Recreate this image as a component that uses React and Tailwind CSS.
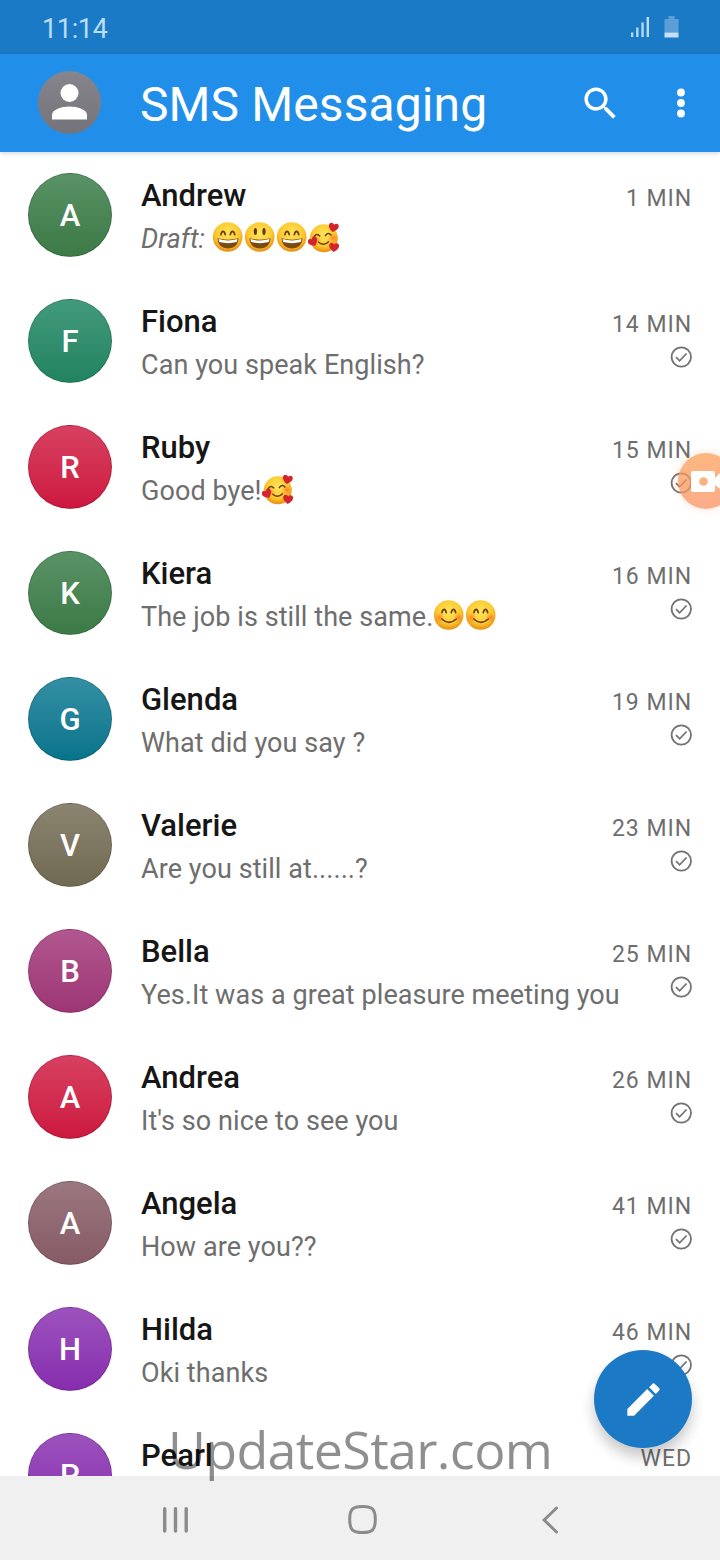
import React from "react";

const conversations = [
  { name: "Andrew", text: "Draft: ", draft: true, emojis: ["grin", "open", "grin", "love"], time: "1 MIN", color: "from-[#5a9266] to-[#3c7a46]" },
  { name: "Fiona", text: "Can you speak English?", time: "14 MIN", color: "from-[#429a7c] to-[#218361]" },
  { name: "Ruby", text: "Good bye!", emojis: ["love"], time: "15 MIN", color: "from-[#d73f60] to-[#cd163f]" },
  { name: "Kiera", text: "The job is still the same.", emojis: ["smile", "smile"], time: "16 MIN", color: "from-[#5a9266] to-[#3c7a46]" },
  { name: "Glenda", text: "What did you say ?", time: "19 MIN", color: "from-[#338fa3] to-[#05748c]" },
  { name: "Valerie", text: "Are you still at......?", time: "23 MIN", color: "from-[#8b8470] to-[#716a52]" },
  { name: "Bella", text: "Yes.It was a great pleasure meeting you", time: "25 MIN", color: "from-[#b1578f] to-[#9d3575]" },
  { name: "Andrea", text: "It's so nice to see you", time: "26 MIN", color: "from-[#d73f60] to-[#cd163f]" },
  { name: "Angela", text: "How are you??", time: "41 MIN", color: "from-[#9b777f] to-[#865b65]" },
  { name: "Hilda", text: "Oki thanks", time: "46 MIN", color: "from-[#9c52bd] to-[#872cae]" },
  { name: "Pearl", text: "", time: "WED", color: "from-[#9c52bd] to-[#872cae]" },
];

function Heart({ x, y, r = 0 }) {
  return (
    <path
      transform={`translate(${x} ${y}) rotate(${r})`}
      d="M0 4.6C-3 2.6-5 .6-5-1.6C-5-4.6-1.3-5.2 0-2.7C1.3-5.2 5-4.6 5-1.6C5 .6 3 2.6 0 4.6Z"
      fill="#d4252f"
    />
  );
}

function Emoji({ kind }) {
  return (
    <svg className="size-8 shrink-0" viewBox="0 0 32 32">
      <defs>
        <radialGradient id="face" cx="50%" cy="38%" r="62%">
          <stop offset="0" stopColor="#ffe65c" />
          <stop offset="0.65" stopColor="#fdc92f" />
          <stop offset="1" stopColor="#e68d12" />
        </radialGradient>
        <radialGradient id="blush">
          <stop offset="0" stopColor="#ff6a2a" stopOpacity="0.75" />
          <stop offset="1" stopColor="#ff7a2e" stopOpacity="0" />
        </radialGradient>
      </defs>
      {kind === "love" ? (
        <>
          <circle cx="15.8" cy="17.3" r="14" fill="url(#face)" />
          <circle cx="8" cy="19" r="5" fill="url(#blush)" />
          <circle cx="25" cy="17" r="5.5" fill="url(#blush)" />
          <g fill="none" stroke="#6b3b10" strokeWidth="1.5" strokeLinecap="round">
            <path d="M6 15.8Q8.8 11.5 11.8 15M17.3 14.6Q20 10.6 23 14" />
            <path d="M10.8 21.2Q15.8 25.6 20.5 20.8" />
          </g>
          <Heart x={25.5} y={6.5} r={12} />
          <Heart x={5} y={20.8} r={-30} />
          <Heart x={26} y={26.3} r={5} />
        </>
      ) : (
        <>
          <circle cx="15.7" cy="16" r="14.8" fill="url(#face)" />
          {kind === "smile" && (
            <>
              <circle cx="6.5" cy="18.5" r="5" fill="url(#blush)" />
              <circle cx="25.5" cy="18.5" r="5" fill="url(#blush)" />
              <path d="M8.7 20Q16 26.8 23.3 20" fill="none" stroke="#6b3b10" strokeWidth="1.6" strokeLinecap="round" />
            </>
          )}
          {kind !== "smile" && (
            <>
              <path d="M5.3 17.3Q16 20.2 26.7 17.3Q25.5 27.5 16 27.5Q6.5 27.5 5.3 17.3Z" fill="#7b4a12" />
              <path d="M6.5 18.1Q16 20.8 25.5 18.1L24.8 21Q16 23.3 7.2 21Z" fill="#fff" />
            </>
          )}
          {kind === "open" ? (
            <g fill="#5e3710">
              <ellipse cx="11.4" cy="10.5" rx="1.6" ry="3.5" />
              <ellipse cx="20" cy="10.5" rx="1.6" ry="3.5" />
            </g>
          ) : (
            <path
              d="M8.9 13.6Q9.6 10.3 11.1 10.3Q12.6 10.3 13.3 13.6M18.3 13.6Q19 10.3 20.5 10.3Q22 10.3 22.7 13.6"
              fill="none"
              stroke="#6b3b10"
              strokeWidth="1.7"
              strokeLinecap="round"
            />
          )}
        </>
      )}
    </svg>
  );
}

function StatusBar() {
  return (
    <div className="flex h-[54px] shrink-0 items-center justify-between bg-[#1b7ac6] pr-[41px] pl-[42px] text-[#b9def8]">
      <span className="pt-[3px] text-[27px] leading-8 tracking-[-0.35px]">11:14</span>
      <div className="flex items-center gap-[14px]">
        <svg className="h-[22px] w-[19px]" viewBox="0 0 19 22" fill="currentColor">
          <rect x="0" y="16.5" width="2.3" height="4.5" />
          <rect x="5.2" y="11.5" width="2.3" height="9.5" />
          <rect x="10.4" y="6.5" width="2.3" height="14.5" />
          <rect x="15.6" y="1" width="2.4" height="20" />
        </svg>
        <svg className="h-[22px] w-[15px]" viewBox="0 0 15 22">
          <path d="M4.5 0h6v3H14.5v13.5H.5V3h4z" fill="#5c9fd8" />
          <path d="M.5 16.5h14V21.5H.5z" fill="#c5e0f8" />
        </svg>
      </div>
    </div>
  );
}

function Header() {
  return (
    <header className="flex h-[98px] shrink-0 items-center bg-[#218fea] pr-[20px] pl-[38px] text-white shadow-[0_1px_5px_rgba(40,80,120,0.25)]">
      <div className="-mt-[2px] flex size-[63px] items-center justify-center rounded-full bg-linear-to-b from-[#86858d] to-[#747379]">
        <svg className="h-9 w-9" viewBox="0 0 36 36" fill="currentColor">
          <circle cx="17.5" cy="9" r="9" />
          <path d="M0 35.5V31C0 25.5 9.5 22.5 17.5 22.5S35 25.5 35 31V35.5Z" />
        </svg>
      </div>
      <h1 className="ml-[39px] flex-1 pt-[4px] text-[48px] leading-[56px] tracking-[0.1px] whitespace-nowrap">SMS Messaging</h1>
      <svg className="mr-[40px] size-[43px]" viewBox="0 0 24 24" fill="currentColor">
        <path d="M15.5 14h-.79l-.28-.27C15.41 12.59 16 11.11 16 9.5 16 5.91 13.09 3 9.5 3S3 5.91 3 9.5 5.91 16 9.5 16c1.61 0 3.09-.59 4.23-1.57l.27.28v.79l5 4.99L20.49 19l-4.99-5zm-6 0C7.01 14 5 11.99 5 9.5S7.01 5 9.5 5 14 7.01 14 9.5 11.99 14 9.5 14z" />
      </svg>
      <svg className="h-8 w-[38px]" viewBox="0 0 38 32" fill="currentColor">
        <circle cx="19" cy="5.5" r="3.9" />
        <circle cx="19" cy="16" r="3.9" />
        <circle cx="19" cy="26.5" r="3.9" />
      </svg>
    </header>
  );
}

function Check() {
  return (
    <svg className="size-[22px]" viewBox="0 0 22 22" fill="none" stroke="#737373" strokeWidth="1.8">
      <circle cx="11.3" cy="11" r="9.7" />
      <path d="M6 11.2L9.6 14.8L16.6 7.5" />
    </svg>
  );
}

function Row({ item }) {
  return (
    <div className="flex h-[126px] shrink-0 pr-[28px] pl-[28px]">
      <div className={`mt-[21px] flex size-[84px] shrink-0 items-center justify-center rounded-full border border-black/15 bg-linear-to-b ${item.color}`}>
        <span className="pt-[2px] text-[31px] leading-9 font-medium text-white">{item.name[0]}</span>
      </div>
      <div className="ml-[29px] flex flex-1 flex-col pt-6">
        <span className="text-[31px] leading-10 font-medium text-[#161616]">{item.name}</span>
        <div className="mt-[3px] flex h-10 items-center text-[27px] leading-10 tracking-[0.07px] whitespace-pre text-[#6e6e6e]">
          <span className={item.draft ? "tracking-normal italic" : ""}>{item.text}</span>
          {item.emojis && (
            <span className="-mt-[5px] flex">
              {item.emojis.map((kind, i) => (
                <Emoji key={i} kind={kind} />
              ))}
            </span>
          )}
        </div>
      </div>
      <div className="flex w-0 flex-col items-end pt-[31px]">
        <span className="text-[23px] leading-8 tracking-[0.95px] whitespace-nowrap text-[#6e6e6e]">{item.time}</span>
        {!item.draft && (
          <div className="mt-[5px]">
            <Check />
          </div>
        )}
      </div>
    </div>
  );
}

function RecorderBubble() {
  return (
    <div className="absolute top-[453px] left-[678px] size-14 rounded-full bg-linear-to-b from-[#fb9f55]/75 to-[#f99061]/75 shadow-[0_0_8px_rgba(255,150,90,0.3)]">
      <svg className="size-14" viewBox="0 0 56 56">
        <path d="M15 18H35Q37 18 37 20V25L42 20V36L37 32V37Q37 39 35 39H15Q13 39 13 37V20Q13 18 15 18Z" fill="#fff" />
        <circle cx="25.5" cy="28.5" r="4.3" fill="#fbb37e" />
      </svg>
    </div>
  );
}

function ComposeButton() {
  return (
    <button className="absolute top-[1350px] left-[594px] flex size-[98px] items-center justify-center rounded-full bg-[#1c79c5] shadow-[0_9px_14px_rgba(0,0,0,0.22)]">
      <svg className="size-[43px]" viewBox="0 0 24 24" fill="white">
        <path d="M3 17.25V21h3.75L17.81 9.94l-3.75-3.75L3 17.25zM20.71 7.04c.39-.39.39-1.02 0-1.41l-2.34-2.34c-.39-.39-1.02-.39-1.41 0l-1.83 1.83 3.75 3.75 1.83-1.83z" />
      </svg>
    </button>
  );
}

function NavBar() {
  return (
    <nav className="flex h-[84px] shrink-0 items-center bg-[#f0f0f0] pt-[3px] pl-[162px]">
      <svg className="h-[28px] w-[27px]" viewBox="0 0 27 28" fill="none" stroke="#8b8b8b" strokeWidth="3.4" strokeLinecap="round">
        <path d="M2.7 2.7V25M13.5 2.7V25M24.2 2.7V25" />
      </svg>
      <svg className="ml-[158px] size-[31px]" viewBox="0 0 31 31" fill="none" stroke="#8b8b8b" strokeWidth="3">
        <path d="M15.5 2.5C25.5 2.5 28.3 5.3 28.3 15.5S25.5 28.5 15.5 28.5S2.7 25.7 2.7 15.5S5.5 2.5 15.5 2.5Z" />
      </svg>
      <svg className="ml-[163px] h-[28px] w-[18px]" viewBox="0 0 18 28" fill="none" stroke="#8b8b8b" strokeWidth="3" strokeLinecap="round">
        <path d="M15.5 2L3.2 14L15.5 26" />
      </svg>
    </nav>
  );
}

export default function App() {
  return (
    <div className="relative flex h-[1560px] w-[720px] flex-col overflow-hidden bg-white font-['Roboto',sans-serif]">
      <StatusBar />
      <Header />
      <main className="flex min-h-0 flex-1 flex-col overflow-hidden">
        {conversations.map((item) => (
          <Row key={item.name} item={item} />
        ))}
      </main>
      <NavBar />
      <RecorderBubble />
      <div className="pointer-events-none absolute top-[1413px] left-[168px] font-['Open_Sans',sans-serif] text-[52px] leading-[72px] tracking-[-0.65px] text-black/44">
        UpdateStar.com
      </div>
      <ComposeButton />
    </div>
  );
}
